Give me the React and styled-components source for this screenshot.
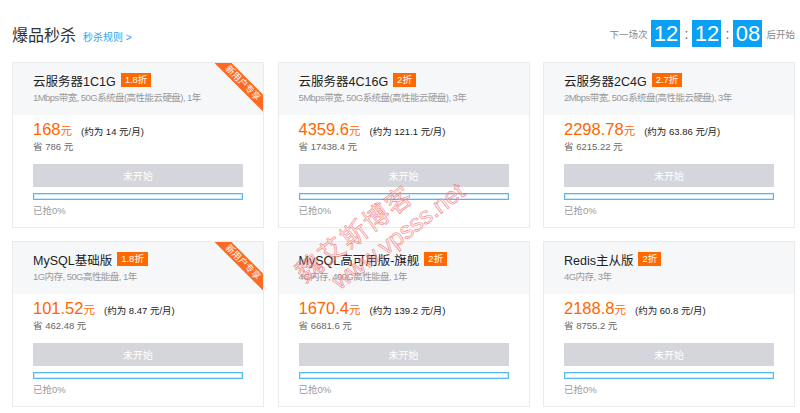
import React from 'react';
import styled, {createGlobalStyle} from 'styled-components';

const GlobalStyle = createGlobalStyle`
    body {
        margin: 0;
        background: #fff;
        font-family: "Liberation Sans", Arial, "Noto Sans CJK SC", sans-serif;
        color: #333;
    }
`;

const Page = styled.div`
    width: 800px;
    height: 413px;
    overflow: hidden;
`;

const Head = styled.div`
    display: flex;
    align-items: center;
    justify-content: space-between;
    height: 27px;
    padding: 20px 5px 0 12px;
`;

const Title = styled.div`
    display: flex;
    align-items: baseline;
    gap: 7px;
`;

const Heading = styled.h2`
    margin: 0;
    font-size: 16px;
    font-weight: normal;
    color: #333;
`;

const RuleLink = styled.a`
    font-size: 10px;
    color: #3d9bea;
    text-decoration: none;
`;

const Countdown = styled.div`
    display: flex;
    align-items: center;
    font-size: 9.5px;
    color: #888;
`;

const Digits = styled.span`
    display: flex;
    align-items: center;
    justify-content: center;
    width: 29px;
    height: 27px;
    background: #0aa0f5;
    color: #fff;
    font-size: 22px;
`;

const Colon = styled.span`
    width: 12px;
    text-align: center;
    font-size: 14px;
    color: #666;
`;

const Grid = styled.div`
    position: relative;
    display: grid;
    grid-template-columns: repeat(3, 252px);
    column-gap: 13.5px;
    row-gap: 13px;
    margin-top: 15px;
    padding-left: 12px;
`;

const Card = styled.div`
    position: relative;
    overflow: hidden;
    height: 166px;
    box-sizing: border-box;
    border: 1px solid #ebebeb;
`;

const CardHead = styled.div`
    height: 52px;
    box-sizing: border-box;
    padding: 10px 20px 0;
    background: #f6f7f9;
`;

const NameRow = styled.div`
    display: flex;
    align-items: center;
    height: 14px;
    font-size: 12.5px;
    color: #222;
`;

const Badge = styled.span`
    margin-left: 5px;
    padding: 0 4px;
    height: 14px;
    line-height: 14px;
    background: #ff6a00;
    color: #fff;
    font-size: 9.5px;
`;

const Spec = styled.div`
    margin-top: 4px;
    line-height: 14px;
    font-size: 9.5px;
    letter-spacing: -0.55px;
    color: #999;
`;

const Ribbon = styled.div`
    position: absolute;
    top: 14px;
    right: -25px;
    width: 90px;
    height: 12px;
    line-height: 12px;
    background: #ff6a22;
    color: #fff;
    font-size: 9px;
    text-align: center;
    transform: rotate(45deg);
`;

const CardBody = styled.div`
    padding: 6px 20px 0;
`;

const PriceRow = styled.div`
    display: flex;
    align-items: baseline;
    height: 16px;
    line-height: 16px;
`;

const Price = styled.span`
    font-size: 16.5px;
    color: #ff6600;
`;

const Yuan = styled.span`
    font-size: 11.5px;
    color: #ff6600;
`;

const Monthly = styled.span`
    margin-left: 9px;
    font-size: 9.5px;
    color: #222;
`;

const Save = styled.div`
    margin-top: 3px;
    line-height: 14px;
    font-size: 9.5px;
    color: #666;
`;

const Button = styled.button`
    display: block;
    width: 100%;
    height: 23px;
    margin-top: 10px;
    padding: 0;
    border: 0;
    background: #d4d6dc;
    color: #fff;
    font-family: inherit;
    font-size: 10px;
`;

const Progress = styled.div`
    height: 7px;
    margin-top: 6px;
    box-sizing: border-box;
    border: 1px solid #56b6f2;
    box-shadow: inset 0 0 0 1px #cbe9fc;
`;

const Sold = styled.div`
    margin-top: 4px;
    line-height: 14px;
    font-size: 9.5px;
    color: #999;
`;

const Watermark = styled.div`
    position: absolute;
    left: 378px;
    top: 172px;
    transform: translate(-50%, -50%) rotate(-37deg);
    pointer-events: none;
    white-space: nowrap;
    color: rgba(255, 200, 200, 0.35);
    -webkit-text-stroke: 0.6px rgba(236, 85, 85, 0.7);
    line-height: 27px;
`;

const MarkLine = styled.div`
    font-size: ${p => p.$size}px;
    letter-spacing: ${p => p.$spacing}px;
    padding-left: ${p => p.$indent}px;
`;

const items = [
    {name: '云服务器1C1G', off: '1.8折', spec: '1Mbps带宽, 50G系统盘(高性能云硬盘), 1年', price: '168', month: '14', save: '786', fresh: true},
    {name: '云服务器4C16G', off: '2折', spec: '5Mbps带宽, 50G系统盘(高性能云硬盘), 3年', price: '4359.6', month: '121.1', save: '17438.4'},
    {name: '云服务器2C4G', off: '2.7折', spec: '2Mbps带宽, 50G系统盘(高性能云硬盘), 3年', price: '2298.78', month: '63.86', save: '6215.22'},
    {name: 'MySQL基础版', off: '1.8折', spec: '1G内存, 50G高性能盘, 1年', price: '101.52', month: '8.47', save: '462.48', fresh: true},
    {name: 'MySQL高可用版-旗舰', off: '2折', spec: '4G内存, 400G高性能盘, 1年', price: '1670.4', month: '139.2', save: '6681.6'},
    {name: 'Redis主从版', off: '2折', spec: '4G内存, 3年', price: '2188.8', month: '60.8', save: '8755.2'},
];

function Deal({item}) {
    return (
        <Card>
            <CardHead>
                <NameRow>
                    {item.name}
                    <Badge>{item.off}</Badge>
                </NameRow>
                <Spec>{item.spec}</Spec>
            </CardHead>
            {item.fresh ? <Ribbon>新用户专享</Ribbon> : null}
            <CardBody>
                <PriceRow>
                    <Price>{item.price}</Price>
                    <Yuan>元</Yuan>
                    <Monthly>(约为 {item.month} 元/月)</Monthly>
                </PriceRow>
                <Save>省 {item.save} 元</Save>
                <Button type="button">未开始</Button>
                <Progress />
                <Sold>已抢0%</Sold>
            </CardBody>
        </Card>
    );
}

export default function App() {
    return (
        <Page>
            <GlobalStyle />
            <Head>
                <Title>
                    <Heading>爆品秒杀</Heading>
                    <RuleLink href="#">秒杀规则 &gt;</RuleLink>
                </Title>
                <Countdown>
                    <span style={{marginRight: 4}}>下一场次</span>
                    <Digits>12</Digits>
                    <Colon>:</Colon>
                    <Digits>12</Digits>
                    <Colon>:</Colon>
                    <Digits>08</Digits>
                    <span style={{marginLeft: 4}}>后开始</span>
                </Countdown>
            </Head>
            <Grid>
                {items.map(item => <Deal key={item.name} item={item} />)}
                <Watermark>
                    <MarkLine $size={26} $spacing={2} $indent={6}>魏艾斯博客</MarkLine>
                    <MarkLine $size={24} $spacing={0} $indent={30}>www.vpsss.net</MarkLine>
                </Watermark>
            </Grid>
        </Page>
    );
}
